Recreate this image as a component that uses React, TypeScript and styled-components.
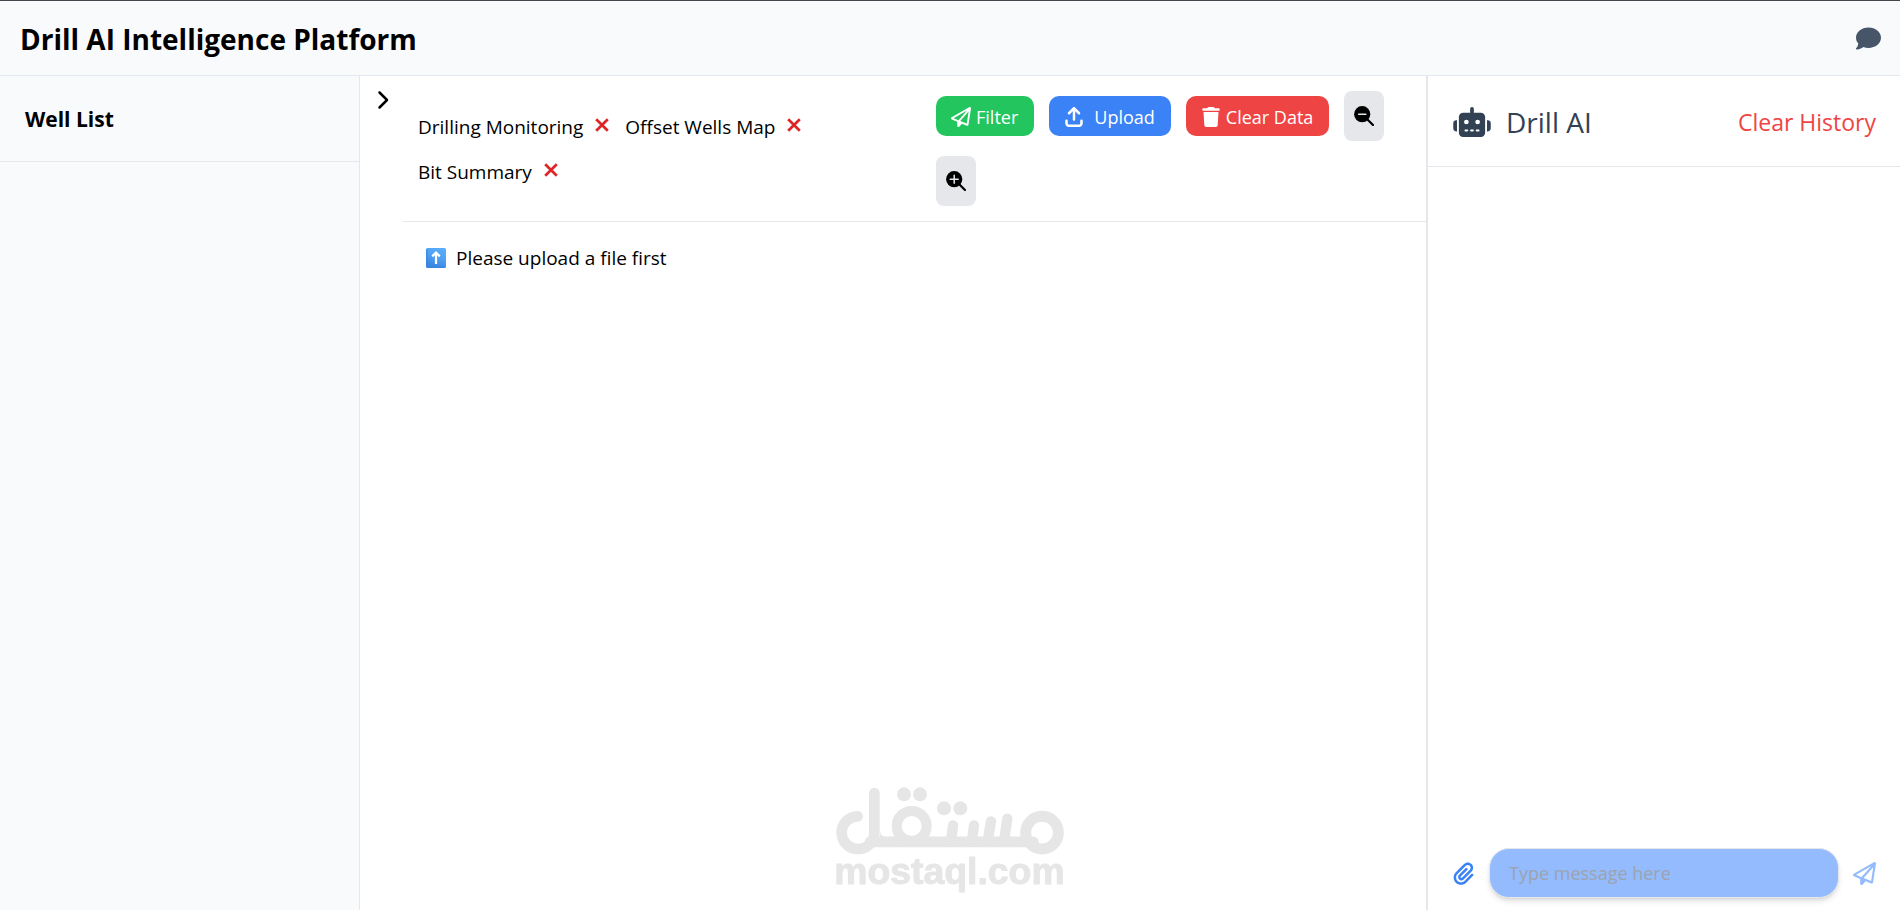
import React from "react";
import styled, { createGlobalStyle } from "styled-components";
import {
  FaArrowUpFromBracket,
  FaChevronRight,
  FaComment,
  FaPaperclip,
  FaRegPaperPlane,
  FaRobot,
  FaTrash,
} from "react-icons/fa6";

const GlobalStyle = createGlobalStyle`
  *, *::before, *::after { box-sizing: border-box; }
  body {
    margin: 0;
    background: #ffffff;
    color: #000000;
    font-family: "Segoe UI", "Open Sans", sans-serif;
    font-size: 19px;
    line-height: 30px;
  }
  button, input { font: inherit; color: inherit; }
  button { margin: 0; padding: 0; border: 0; background: none; cursor: pointer; }
  h1, h2, p { margin: 0; }
  svg { display: block; flex: none; }
`;

const Shell = styled.div`
  display: flex;
  flex-direction: column;
  min-height: 100vh;
  border-top: 1px solid #43474d;
`;

const TopBar = styled.header`
  display: flex;
  align-items: center;
  justify-content: space-between;
  height: 75px;
  padding: 0 19px 0 20px;
  background: #f9fafc;
  border-bottom: 1px solid #e2e8f0;
`;

const Title = styled.h1`
  padding-top: 2px;
  font-size: 28px;
  line-height: 36px;
  font-weight: 700;
`;

const ChatToggle = styled.button`
  color: #475569;
  font-size: 25px;
`;

const Body = styled.div`
  display: flex;
  flex: 1;
`;

const Sidebar = styled.aside`
  flex: none;
  width: 360px;
  background: #f9fafc;
  border-right: 1px solid #e5e7eb;
`;

const SidebarHeader = styled.div`
  display: flex;
  align-items: center;
  height: 86px;
  padding: 0 25px;
  border-bottom: 1px solid #e5e7eb;
`;

const SidebarTitle = styled.h2`
  font-size: 21px;
  font-weight: 700;
`;

const Workspace = styled.main`
  display: flex;
  flex: 1;
  min-width: 0;
`;

const Rail = styled.div`
  flex: none;
  width: 43px;
  padding: 14px 12px;
`;

const RailButton = styled.button`
  display: block;
  font-size: 20px;
`;

const Content = styled.div`
  flex: 1;
  min-width: 0;
`;

const Toolbar = styled.div`
  display: flex;
  align-items: center;
  padding: 15px;
  border-bottom: 1px solid #e5e7eb;
`;

const TabList = styled.div`
  display: flex;
  flex: 1;
  flex-wrap: wrap;
  column-gap: 16px;
  padding-top: 2px;
`;

const Tab = styled.div`
  display: flex;
  align-items: center;
  gap: 12px;
  height: 45px;
`;

const CloseButton = styled.button`
  padding-bottom: 4px;
  color: #dc2626;
`;

const Actions = styled.div`
  display: flex;
  flex: 0 0 475px;
  flex-wrap: wrap;
  align-items: center;
  gap: 15px;
`;

const ActionButton = styled.button<{ $color: string; $gap: number }>`
  display: flex;
  align-items: center;
  gap: ${(p) => p.$gap}px;
  height: 40px;
  padding: 1px 16px 0 15px;
  border-radius: 10px;
  background: ${(p) => p.$color};
  color: #ffffff;
  font-size: 18px;

  svg { height: 20px; width: auto; }
`;

const ZoomButton = styled.button`
  height: 50px;
  padding: 0 10px;
  border-radius: 8px;
  background: #e5e7eb;
`;

const Notice = styled.p`
  display: flex;
  align-items: center;
  gap: 10px;
  padding: 21px 23px;
`;

const ChatPanel = styled.section`
  display: flex;
  flex-direction: column;
  flex: none;
  width: 474px;
  border-left: 2px solid #e5e7eb;
`;

const ChatHeader = styled.div`
  display: flex;
  align-items: center;
  justify-content: space-between;
  height: 91px;
  padding: 2px 24px 0 25px;
  border-bottom: 1px solid #e5e7eb;
`;

const ChatName = styled.h2`
  display: flex;
  align-items: center;
  gap: 15px;
  color: #334155;
  font-size: 28px;
  font-weight: 400;

  svg { width: 38px; height: 30px; }
`;

const ClearHistory = styled.button`
  color: #ef4444;
  font-size: 23px;
`;

const Messages = styled.div`
  flex: 1;
`;

const Composer = styled.form`
  display: flex;
  align-items: center;
  gap: 14px;
  padding: 12px 24px 12px 24px;
`;

const ComposerButton = styled.button<{ $color: string }>`
  color: ${(p) => p.$color};

  svg { height: 23px; width: auto; }
`;

const MessageInput = styled.input`
  flex: 1;
  min-width: 0;
  height: 50px;
  padding: 0 19px;
  border: 1px solid #e5e7eb;
  border-radius: 20px;
  background: #93bbfd;
  box-shadow: 0 4px 6px -1px rgba(0, 0, 0, 0.12), 0 2px 4px -2px rgba(0, 0, 0, 0.12);
  font-size: 18px;

  &::placeholder { color: #9ca3af; opacity: 1; }
`;

const Watermark = styled.div`
  position: fixed;
  left: 50%;
  bottom: 8px;
  transform: translateX(-50%);
  pointer-events: none;
`;

function CloseIcon() {
  return (
    <svg width="14" height="14" viewBox="0 0 14 14" fill="none" stroke="currentColor" strokeWidth="2.7">
      <path d="M1.200 1.200 12.800 12.800M12.800 1.200 1.200 12.800" />
    </svg>
  );
}

function ZoomIcon({ plus }: { plus?: boolean }) {
  return (
    <svg width="20" height="20" viewBox="0 0 20 20">
      <circle cx="8.2" cy="8.2" r="8.1" fill="#000" />
      <path d="M12.5 12.5 19 19" stroke="#000" strokeWidth="2.2" strokeLinecap="round" />
      <path d={plus ? "M4.2 8.2h8M8.2 4.2v8" : "M4.6 8.2h7.2"} stroke="#e5e7eb" strokeWidth="1.5" strokeLinecap="round" />
    </svg>
  );
}

function UploadBadge() {
  return (
    <svg width="20" height="20" viewBox="0 0 20 20">
      <defs>
        <linearGradient id="badge" x1="1" y1="0" x2="0.6" y2="1">
          <stop offset="0" stopColor="#5cb0fb" />
          <stop offset="0.55" stopColor="#4fa0f3" />
          <stop offset="1" stopColor="#3a86e4" />
        </linearGradient>
      </defs>
      <rect width="20" height="20" rx="1.6" fill="url(#badge)" />
      <path d="M1 1v18h18" fill="none" stroke="#3785e2" strokeWidth="1" />
      <path d="M10 16V5M6.2 8.4 10 4.6l3.8 3.8" fill="none" stroke="#fff" strokeWidth="2.2" />
    </svg>
  );
}

function MostaqlLogo() {
  return (
    <svg width="248" height="119" viewBox="18 38 744 357" role="img" aria-label="mostaql.com">
      <g fill="none" stroke="#e6e6e6" strokeWidth="32" strokeLinecap="round">
        <path d="M113 138A49 49 0 1 0 163 187V68" />
        <path d="M150 214.500H640" />
        <circle cx="275" cy="167" r="45" strokeWidth="30" />
        <path d="M399 165 393 212M462 165 456 212M513 153 503 212M562 145 552 212" strokeWidth="31" />
        <circle cx="666" cy="187" r="49" strokeWidth="33" />
      </g>
      <g fill="#e6e6e6">
        <circle cx="252" cy="72" r="21" />
        <circle cx="300" cy="72" r="21" />
        <circle cx="372" cy="114" r="21" />
        <circle cx="421" cy="114" r="21" />
        <path d="M180 180Q180 200 200 200H180zM222 190Q228 200 218 200H242zM328 190Q322 200 335 200H310z" />
        <text
          x="43"
          y="341"
          fontFamily="Liberation Sans, Arial, sans-serif"
          fontWeight="700"
          fontSize="112"
          stroke="#e6e6e6"
          strokeWidth="3"
          strokeLinejoin="round"
        >
          mostaql.com
        </text>
      </g>
    </svg>
  );
}

const tabs = ["Drilling Monitoring", "Offset Wells Map", "Bit Summary"];

export default function App() {
  return (
    <>
      <GlobalStyle />
      <Shell>
        <TopBar>
          <Title>Drill AI Intelligence Platform</Title>
          <ChatToggle type="button" aria-label="Toggle chat">
            <FaComment />
          </ChatToggle>
        </TopBar>
        <Body>
          <Sidebar>
            <SidebarHeader>
              <SidebarTitle>Well List</SidebarTitle>
            </SidebarHeader>
          </Sidebar>
          <Workspace>
            <Rail>
              <RailButton type="button" aria-label="Expand">
                <FaChevronRight />
              </RailButton>
            </Rail>
            <Content>
              <Toolbar>
                <TabList>
                  {tabs.map((name) => (
                    <Tab key={name}>
                      <button type="button">{name}</button>
                      <CloseButton type="button" aria-label={`Close ${name}`}>
                        <CloseIcon />
                      </CloseButton>
                    </Tab>
                  ))}
                </TabList>
                <Actions>
                  <ActionButton type="button" $color="#22c55e" $gap={5}>
                    <FaRegPaperPlane />
                    Filter
                  </ActionButton>
                  <ActionButton type="button" $color="#3b82f6" $gap={10}>
                    <FaArrowUpFromBracket />
                    Upload
                  </ActionButton>
                  <ActionButton type="button" $color="#ef4444" $gap={5}>
                    <FaTrash />
                    Clear Data
                  </ActionButton>
                  <ZoomButton type="button" aria-label="Zoom out">
                    <ZoomIcon />
                  </ZoomButton>
                  <ZoomButton type="button" aria-label="Zoom in">
                    <ZoomIcon plus />
                  </ZoomButton>
                </Actions>
              </Toolbar>
              <Notice>
                <UploadBadge />
                Please upload a file first
              </Notice>
            </Content>
          </Workspace>
          <ChatPanel>
            <ChatHeader>
              <ChatName>
                <FaRobot />
                Drill AI
              </ChatName>
              <ClearHistory type="button">Clear History</ClearHistory>
            </ChatHeader>
            <Messages />
            <Composer onSubmit={(e) => e.preventDefault()}>
              <ComposerButton type="button" aria-label="Attach file" $color="#3b82f6">
                <FaPaperclip />
              </ComposerButton>
              <MessageInput type="text" aria-label="Message" placeholder="Type message here" />
              <ComposerButton type="submit" aria-label="Send" $color="#93bbfd">
                <FaRegPaperPlane />
              </ComposerButton>
            </Composer>
          </ChatPanel>
        </Body>
      </Shell>
      <Watermark>
        <MostaqlLogo />
      </Watermark>
    </>
  );
}
